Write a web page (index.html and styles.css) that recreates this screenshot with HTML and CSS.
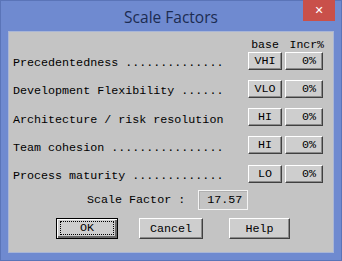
FILE: index.html
```html
<!DOCTYPE html>
<html lang="en">
<head>
  <meta charset="UTF-8">
  <title>Scale Factors</title>
  <link rel="stylesheet" href="styles.css">
</head>
<body>
  <div class="window">
    <div class="titlebar">
      <span class="title">Scale Factors</span>
      <button class="close">&#x2715;</button>
    </div>
    <div class="client">
      <div class="heads">
        <span class="head">base</span>
        <span class="head head-incr">Incr%</span>
      </div>

      <div class="factors">
        <span class="label">Precedentedness ..............</span>
        <button class="btn base">VHI</button>
        <button class="btn incr">0%</button>

        <span class="label">Development Flexibility ......</span>
        <button class="btn base">VLO</button>
        <button class="btn incr">0%</button>

        <span class="label">Architecture / risk resolution</span>
        <button class="btn base">HI</button>
        <button class="btn incr">0%</button>

        <span class="label">Team cohesion ................</span>
        <button class="btn base">HI</button>
        <button class="btn incr">0%</button>

        <span class="label">Process maturity .............</span>
        <button class="btn base">LO</button>
        <button class="btn incr">0%</button>
      </div>

      <div class="result">
        <span class="label">Scale Factor : </span>
        <span class="value">17.57</span>
      </div>

      <div class="actions">
        <button class="btn action default"><span class="focus">OK</span></button>
        <button class="btn action cancel">Cancel</button>
        <button class="btn action help">Help</button>
      </div>
    </div>
  </div>
</body>
</html>
```
FILE: styles.css
```css
body {
  margin: 0;
  background: #6f8ad0;
}
.window {
  width: 342px;
  height: 261px;
  background: #6f8ad0;
  box-sizing: border-box;
  border: 1px solid #5a74b8;
}
.titlebar {
  position: relative;
  height: 30px;
  display: flex;
  align-items: center;
  justify-content: center;
}
.title {
  font-family: "Open Sans", "Noto Sans", sans-serif;
  font-size: 15.5px;
  color: #1c2c52;
  margin-top: 1px;
}
.close {
  position: absolute;
  top: -1px;
  right: 6px;
  width: 32px;
  height: 21px;
  border: 0;
  padding: 0;
  background: #c9504a;
  color: #fff;
  font-size: 11px;
  font-weight: bold;
  font-family: "DejaVu Sans", sans-serif;
}
.client {
  margin: 0 7px;
  height: 222px;
  background: #c4c4c4;
  box-sizing: border-box;
  border: 1px solid #a9b6d6;
  padding: 6px 0 0 4px;
  font-family: "Liberation Mono", "Courier New", monospace;
  font-size: 11.7px;
  color: #000;
}
.heads {
  display: grid;
  grid-template-columns: 34px 38px;
  column-gap: 3px;
  height: 13px;
  padding-left: 235px;
  line-height: 13px;
}
.head {
  text-align: center;
  font-size: 11.5px;
}
.head-incr {
  text-align: right;
  margin-right: -1px;
}
.factors {
  display: grid;
  grid-template-columns: 232px 34px 38px;
  grid-template-rows: repeat(5, 19px);
  column-gap: 3px;
  row-gap: 9.3px;
  align-items: center;
}
.label {
  white-space: pre;
  padding-top: 5px;
}
.btn {
  font-family: "Liberation Mono", "Courier New", monospace;
  font-size: 11.7px;
  color: #000;
  background: #cecece;
  border-style: solid;
  border-width: 1px;
  border-color: #fff #404040 #404040 #fff;
  box-shadow: inset -1px -1px #8a8a8a;
  padding: 0;
  height: 18px;
}
.incr {
  text-align: right;
  padding-right: 6px;
}
.result {
  display: flex;
  align-items: center;
  margin-top: 7px;
  padding-left: 74px;
}
.result .label {
  padding-top: 0;
}
.value {
  width: 50px;
  height: 20px;
  box-sizing: border-box;
  margin-left: 6px;
  border: 1px solid #f4f4f4;
  box-shadow: inset 1px 1px #b0b0b0;
  text-align: right;
  padding: 2px 5px 0 0;
}
.actions {
  display: flex;
  margin-top: 8px;
  padding-left: 43px;
}
.action {
  height: 21px;
  width: 62px;
}
.default {
  border: 1px solid #000;
  box-shadow: inset 1px 1px #fff, inset -2px -2px #6a6a6a;
  padding: 2px 3px 3px 3px;
}
.focus {
  display: block;
  height: 100%;
  box-sizing: border-box;
  border: 1px dotted #000;
  line-height: 12px;
}
.cancel {
  width: 64px;
  margin-left: 21px;
}
.help {
  width: 61px;
  margin-left: 26px;
}
```
